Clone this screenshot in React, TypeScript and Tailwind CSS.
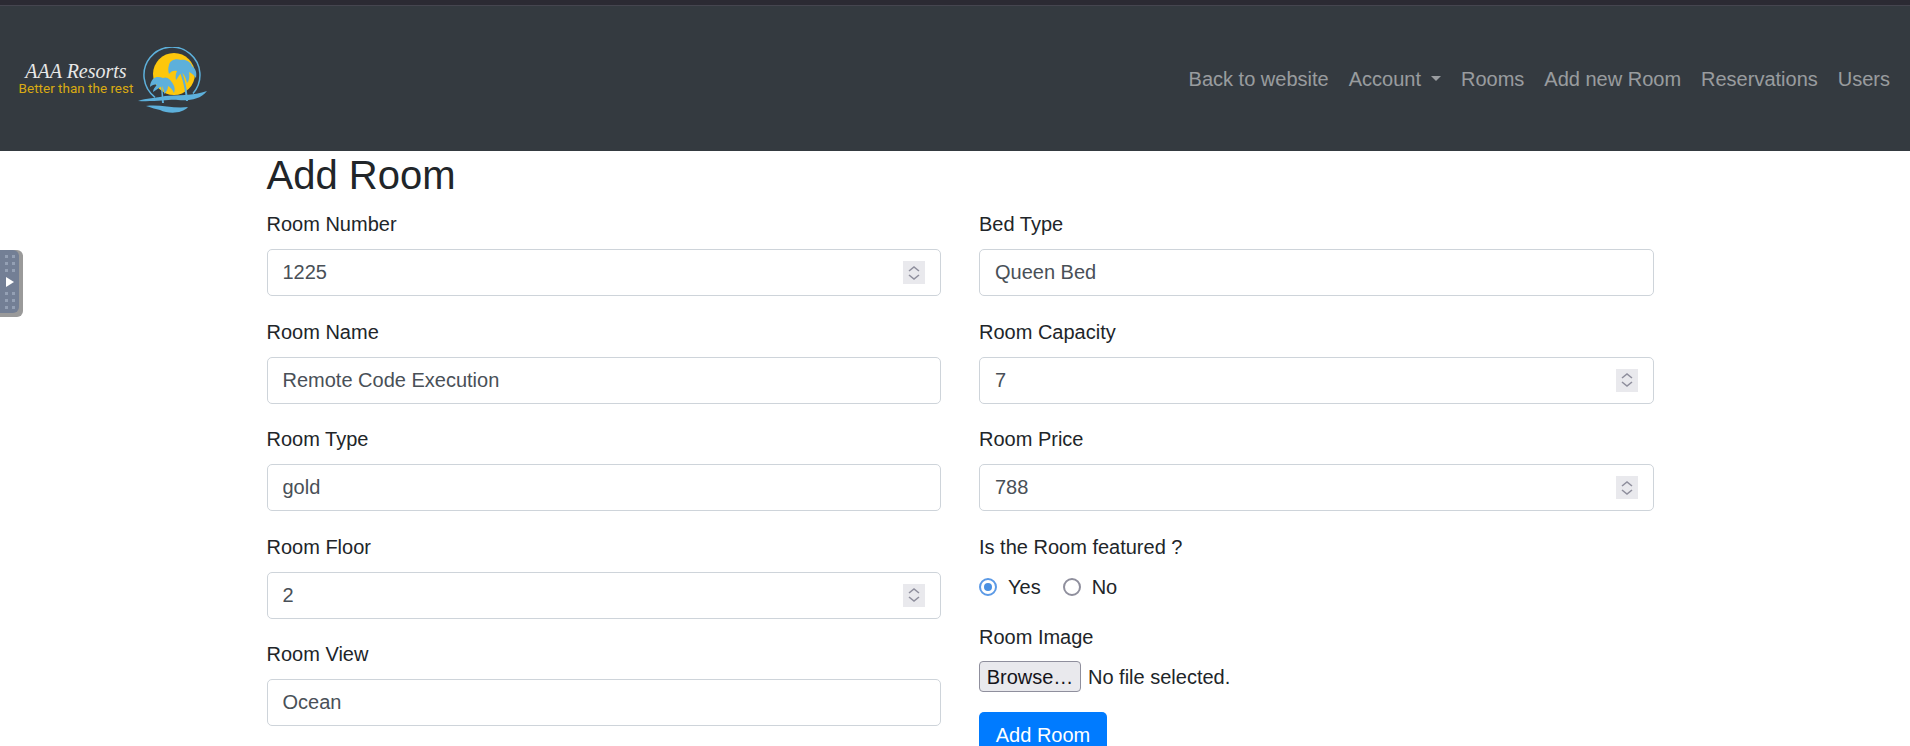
const navLinks = ['Back to website', 'Account', 'Rooms', 'Add new Room', 'Reservations', 'Users'];

const leftFields = [
  { label: 'Room Number', value: '1225', spinner: true },
  { label: 'Room Name', value: 'Remote Code Execution' },
  { label: 'Room Type', value: 'gold' },
  { label: 'Room Floor', value: '2', spinner: true },
  { label: 'Room View', value: 'Ocean' },
];

const rightFields = [
  { label: 'Bed Type', value: 'Queen Bed' },
  { label: 'Room Capacity', value: '7', spinner: true },
  { label: 'Room Price', value: '788', spinner: true },
];

const Logo = () => (
  <div className="flex items-center">
    <div className="flex w-[119px] flex-col items-center pr-[5px]">
      <span className="font-['Liberation_Serif',serif] text-[20px] italic leading-[20px] text-[#e8e8e8]">
        AAA Resorts
      </span>
      <span className="font-['Roboto',sans-serif] text-[13.5px] leading-[15px] text-[#d9aa12] whitespace-nowrap">
        Better than the rest
      </span>
    </div>
    <svg width="70" height="68" viewBox="0 0 70 68" className="mt-[4px]">
      <path d="M17 50.3 A28 28 0 1 1 55 46.5" fill="none" stroke="#5db0db" strokeWidth="1.5" />
      <circle cx="36" cy="27" r="21" fill="#fdc70c" />
      <path d="M27 49 C38 48 56 49 69 44 C62 53 50 54 40 53 C32 52 18 55 0 54 C8 51 18 51 27 49 Z" fill="#5db0db" />
      <path d="M8 59 C22 57 36 62 50 60 C44 67 30 67 22 63 C18 62 14 61 8 59 Z" fill="#5db0db" />
      <path d="M31 18 C32 13 38 11 43 13 C47 12 53 15 54 19 C58 22 59 26 58 31 C55 27 53 26 51 25 C52 30 51 34 49 36 C48 31 46 27 44 26 C41 27 40 31 38 33 C37 29 38 26 39 24 C36 23 33 24 31 27 C30 24 30 21 31 18 Z" fill="#5db0db" />
      <path d="M44 25 C47 33 49 42 50 54 L48 54 C47 42 45 33 42 26 Z" fill="#5db0db" />
      <path d="M15 32 C18 29 22 30 25 31 C29 29 33 33 35 37 C37 40 37 43 36 46 C34 42 32 40 30 39 C30 43 28 45 26 47 C26 43 25 41 24 39 C21 41 18 43 15 45 C15 42 17 40 19 38 C17 37 14 38 12 40 C12 37 13 34 15 32 Z" fill="#5db0db" />
      <path d="M24 38 L26 56 L24 56 L23 38 Z" fill="#5db0db" />
    </svg>
  </div>
);

const Spinner = () => (
  <span className="absolute right-4 top-[12px] flex h-[23px] w-[22px] items-center justify-center bg-[#e9e9ed]">
    <svg width="14" height="18" viewBox="0 0 14 18" fill="none" stroke="#8f8f9d" strokeWidth="1.6">
      <path d="M2 7 L7 3 L12 7" />
      <path d="M2 11 L7 15 L12 11" />
    </svg>
  </span>
);

const Field = ({ label, value, spinner }: { label: string; value: string; spinner?: boolean }) => (
  <div className="mb-[20.5px]">
    <label className="mb-[10px] block leading-[30px]">{label}</label>
    <div className="relative">
      <input
        readOnly
        value={value}
        className="block h-[47px] w-full rounded-[5px] border border-[#ced4da] bg-white px-[15px] text-[#495057] outline-none"
      />
      {spinner && <Spinner />}
    </div>
  </div>
);

function Dots() {
  return (
    <div className="grid grid-cols-2 gap-[4px]">
      {[0, 1, 2, 3, 4, 5].map((i) => (
        <span key={i} className="h-[3px] w-[3px] bg-[#94a0b4]" />
      ))}
    </div>
  );
}

export default function App() {
  return (
    <div className="h-screen overflow-hidden bg-white font-['Liberation_Sans',sans-serif] text-[20px] text-[#212529]">
      <div className="h-[5px] bg-[#2b2a33]" />
      <nav className="flex h-[146px] items-center justify-between border-t border-[#45454f] bg-[#343a40] pl-[19px] pr-[10px]">
        <Logo />
        <ul className="flex items-center">
          {navLinks.map((link) => (
            <li key={link} className="flex items-center px-[10px] text-white/50">
              {link}
              {link === 'Account' && (
                <span className="ml-[10px] h-0 w-0 border-x-[5px] border-t-[5px] border-x-transparent border-t-white/50" />
              )}
            </li>
          ))}
        </ul>
      </nav>

      <aside className="absolute left-0 top-[250px] h-[67px] w-[23px] rounded-r-[6px] bg-[#9a9a9a] pb-[4px] pr-[4px]">
        <div className="flex h-full flex-col items-center justify-center gap-[5px] rounded-r-[6px] bg-[#737f95]">
          <Dots />
          <span className="h-0 w-0 border-y-[5px] border-l-[8px] border-y-transparent border-l-white" />
          <Dots />
        </div>
      </aside>

      <main className="pl-[266.5px]">
        <h1 className="mb-[10px] text-[40px] font-normal leading-[48px]">Add Room</h1>
        <div className="grid w-[1387.5px] grid-cols-[674.5px_675px] gap-x-[38px]">
          <div>
            {leftFields.map((f) => (
              <Field key={f.label} {...f} />
            ))}
          </div>
          <div>
            {rightFields.map((f) => (
              <Field key={f.label} {...f} />
            ))}
            <div className="mb-[10px] leading-[30px]">Is the Room featured ?</div>
            <div className="mb-5 flex h-[30px] items-center">
              <span className="mr-[11px] flex h-[18px] w-[18px] items-center justify-center rounded-full border-2 border-[#5c9ae6]">
                <span className="h-2 w-2 rounded-full bg-[#4a90e2]" />
              </span>
              <span className="mr-[22px]">Yes</span>
              <span className="mr-[11px] h-[18px] w-[18px] rounded-full border-2 border-[#8f8f9d]" />
              <span>No</span>
            </div>
            <div className="mb-[10px] leading-[30px]">Room Image</div>
            <div className="mb-5 flex h-[30px] items-center">
              <button className="mr-[7px] h-[31px] w-[102px] rounded-[4px] border border-[#8f8f9d] bg-[#e9e9ed] text-[#15141a]">
                Browse…
              </button>
              <span>No file selected.</span>
            </div>
            <button className="h-[47.5px] w-[128px] rounded-[5px] bg-[#007bff] text-white">Add Room</button>
          </div>
        </div>
      </main>
    </div>
  );
}
